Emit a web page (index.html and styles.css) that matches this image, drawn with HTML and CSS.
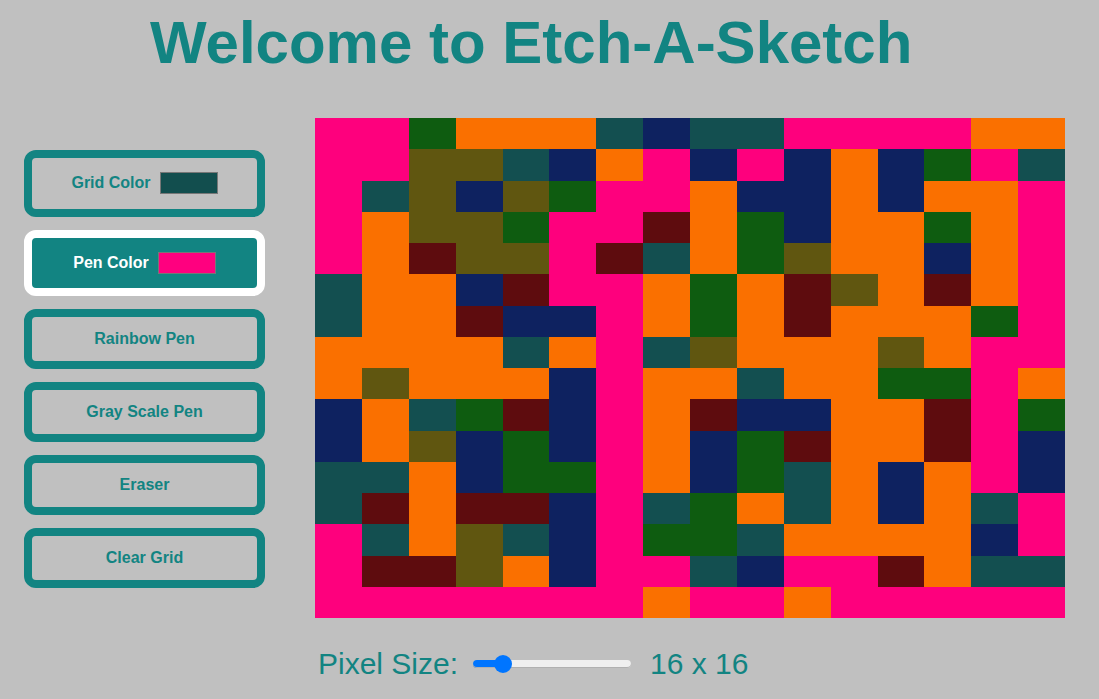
FILE: index.html
```html
<!DOCTYPE html>
<html lang="en">
<head>
<meta charset="utf-8">
<title>Etch-A-Sketch</title>
<link rel="stylesheet" href="styles.css">
</head>
<body>
<h1 class="title">Welcome to Etch-A-Sketch</h1>
<div class="main">
  <div class="sidebar">
    <button class="btn btn-tall">Grid Color <input type="color" class="swatch" value="#124e4e"></button>
    <button class="btn btn-tall active">Pen Color <input type="color" class="swatch" value="#ff007f"></button>
    <button class="btn">Rainbow Pen</button>
    <button class="btn">Gray Scale Pen</button>
    <button class="btn">Eraser</button>
    <button class="btn">Clear Grid</button>
  </div>
  <div class="board">
    <div class="grid">
      <i class="p"></i><i class="p"></i><i class="g"></i><i class="o"></i><i class="o"></i><i class="o"></i><i class="t"></i><i class="n"></i><i class="t"></i><i class="t"></i><i class="p"></i><i class="p"></i><i class="p"></i><i class="p"></i><i class="o"></i><i class="o"></i>
      <i class="p"></i><i class="p"></i><i class="l"></i><i class="l"></i><i class="t"></i><i class="n"></i><i class="o"></i><i class="p"></i><i class="n"></i><i class="p"></i><i class="n"></i><i class="o"></i><i class="n"></i><i class="g"></i><i class="p"></i><i class="t"></i>
      <i class="p"></i><i class="t"></i><i class="l"></i><i class="n"></i><i class="l"></i><i class="g"></i><i class="p"></i><i class="p"></i><i class="o"></i><i class="n"></i><i class="n"></i><i class="o"></i><i class="n"></i><i class="o"></i><i class="o"></i><i class="p"></i>
      <i class="p"></i><i class="o"></i><i class="l"></i><i class="l"></i><i class="g"></i><i class="p"></i><i class="p"></i><i class="r"></i><i class="o"></i><i class="g"></i><i class="n"></i><i class="o"></i><i class="o"></i><i class="g"></i><i class="o"></i><i class="p"></i>
      <i class="p"></i><i class="o"></i><i class="r"></i><i class="l"></i><i class="l"></i><i class="p"></i><i class="r"></i><i class="t"></i><i class="o"></i><i class="g"></i><i class="l"></i><i class="o"></i><i class="o"></i><i class="n"></i><i class="o"></i><i class="p"></i>
      <i class="t"></i><i class="o"></i><i class="o"></i><i class="n"></i><i class="r"></i><i class="p"></i><i class="p"></i><i class="o"></i><i class="g"></i><i class="o"></i><i class="r"></i><i class="l"></i><i class="o"></i><i class="r"></i><i class="o"></i><i class="p"></i>
      <i class="t"></i><i class="o"></i><i class="o"></i><i class="r"></i><i class="n"></i><i class="n"></i><i class="p"></i><i class="o"></i><i class="g"></i><i class="o"></i><i class="r"></i><i class="o"></i><i class="o"></i><i class="o"></i><i class="g"></i><i class="p"></i>
      <i class="o"></i><i class="o"></i><i class="o"></i><i class="o"></i><i class="t"></i><i class="o"></i><i class="p"></i><i class="t"></i><i class="l"></i><i class="o"></i><i class="o"></i><i class="o"></i><i class="l"></i><i class="o"></i><i class="p"></i><i class="p"></i>
      <i class="o"></i><i class="l"></i><i class="o"></i><i class="o"></i><i class="o"></i><i class="n"></i><i class="p"></i><i class="o"></i><i class="o"></i><i class="t"></i><i class="o"></i><i class="o"></i><i class="g"></i><i class="g"></i><i class="p"></i><i class="o"></i>
      <i class="n"></i><i class="o"></i><i class="t"></i><i class="g"></i><i class="r"></i><i class="n"></i><i class="p"></i><i class="o"></i><i class="r"></i><i class="n"></i><i class="n"></i><i class="o"></i><i class="o"></i><i class="r"></i><i class="p"></i><i class="g"></i>
      <i class="n"></i><i class="o"></i><i class="l"></i><i class="n"></i><i class="g"></i><i class="n"></i><i class="p"></i><i class="o"></i><i class="n"></i><i class="g"></i><i class="r"></i><i class="o"></i><i class="o"></i><i class="r"></i><i class="p"></i><i class="n"></i>
      <i class="t"></i><i class="t"></i><i class="o"></i><i class="n"></i><i class="g"></i><i class="g"></i><i class="p"></i><i class="o"></i><i class="n"></i><i class="g"></i><i class="t"></i><i class="o"></i><i class="n"></i><i class="o"></i><i class="p"></i><i class="n"></i>
      <i class="t"></i><i class="r"></i><i class="o"></i><i class="r"></i><i class="r"></i><i class="n"></i><i class="p"></i><i class="t"></i><i class="g"></i><i class="o"></i><i class="t"></i><i class="o"></i><i class="n"></i><i class="o"></i><i class="t"></i><i class="p"></i>
      <i class="p"></i><i class="t"></i><i class="o"></i><i class="l"></i><i class="t"></i><i class="n"></i><i class="p"></i><i class="g"></i><i class="g"></i><i class="t"></i><i class="o"></i><i class="o"></i><i class="o"></i><i class="o"></i><i class="n"></i><i class="p"></i>
      <i class="p"></i><i class="r"></i><i class="r"></i><i class="l"></i><i class="o"></i><i class="n"></i><i class="p"></i><i class="p"></i><i class="t"></i><i class="n"></i><i class="p"></i><i class="p"></i><i class="r"></i><i class="o"></i><i class="t"></i><i class="t"></i>
      <i class="p"></i><i class="p"></i><i class="p"></i><i class="p"></i><i class="p"></i><i class="p"></i><i class="p"></i><i class="o"></i><i class="p"></i><i class="p"></i><i class="o"></i><i class="p"></i><i class="p"></i><i class="p"></i><i class="p"></i><i class="p"></i>
    </div>
    <div class="controls">
      <label for="size" class="label">Pixel Size:</label>
      <input type="range" id="size" class="slider" min="1" max="100" value="16">
      <span class="value">16 x 16</span>
    </div>
  </div>
</div>
</body>
</html>
```

FILE: styles.css
```css
html, body {
  margin: 0;
  background: #c0c0c0;
}
body {
  font-family: "Liberation Sans", Arial, sans-serif;
  color: #128482;
}
.title {
  margin: 8px 0 0 150px;
  font-size: 60px;
  line-height: 69px;
  font-weight: bold;
}
.main {
  display: flex;
  align-items: flex-start;
  gap: 50px;
  margin-top: 41px;
  padding-left: 24px;
}
.sidebar {
  width: 241px;
  display: flex;
  flex-direction: column;
  gap: 13px;
  margin-top: 32px;
}
.btn {
  box-sizing: border-box;
  display: flex;
  align-items: center;
  justify-content: center;
  gap: 9px;
  width: 100%;
  margin: 0;
  padding: 13px 8px;
  border: 8px solid #128482;
  border-radius: 12px;
  background: transparent;
  color: #128482;
  font-family: "Liberation Sans", Arial, sans-serif;
  font-weight: bold;
  font-size: 16px;
  line-height: 18px;
}
.btn-tall {
  padding-top: 13.25px;
  padding-bottom: 13.25px;
}
.btn.active {
  background: #128482;
  border-color: #ffffff;
  color: #ffffff;
}
.swatch {
  width: 58px;
  height: 24px;
  margin: 0;
  padding: 1px 0;
  border: none;
  background: transparent;
  -webkit-appearance: none;
  appearance: none;
}
.swatch::-webkit-color-swatch-wrapper {
  padding: 0;
}
.swatch::-webkit-color-swatch {
  border: 1px solid #777777;
  border-radius: 0;
}
.board {
  display: flex;
  flex-direction: column;
}
.grid {
  width: 750px;
  height: 500px;
  display: grid;
  grid-template-columns: repeat(16, 1fr);
  grid-template-rows: repeat(16, 1fr);
}
.grid i {
  display: block;
}
.p { background: #fe007d; }
.o { background: #fa7000; }
.g { background: #0e5c10; }
.l { background: #605610; }
.t { background: #134f50; }
.n { background: #0e2260; }
.r { background: #5e0c0e; }
.controls {
  display: flex;
  align-items: center;
  gap: 15px;
  margin-top: 29px;
  padding-left: 3px;
  font-size: 30px;
  line-height: 34px;
}
.slider {
  -webkit-appearance: none;
  appearance: none;
  width: 158px;
  height: 8px;
  margin: 0;
  border-radius: 4px;
  background: linear-gradient(to right, #0075ff 20%, #efefef 20%);
  box-shadow: inset 0 -1px 0 #b0b0b0;
}
.slider::-webkit-slider-thumb {
  -webkit-appearance: none;
  appearance: none;
  width: 18px;
  height: 18px;
  border-radius: 50%;
  background: #0075ff;
  border: none;
}
.value {
  margin-left: 4px;
}
```
